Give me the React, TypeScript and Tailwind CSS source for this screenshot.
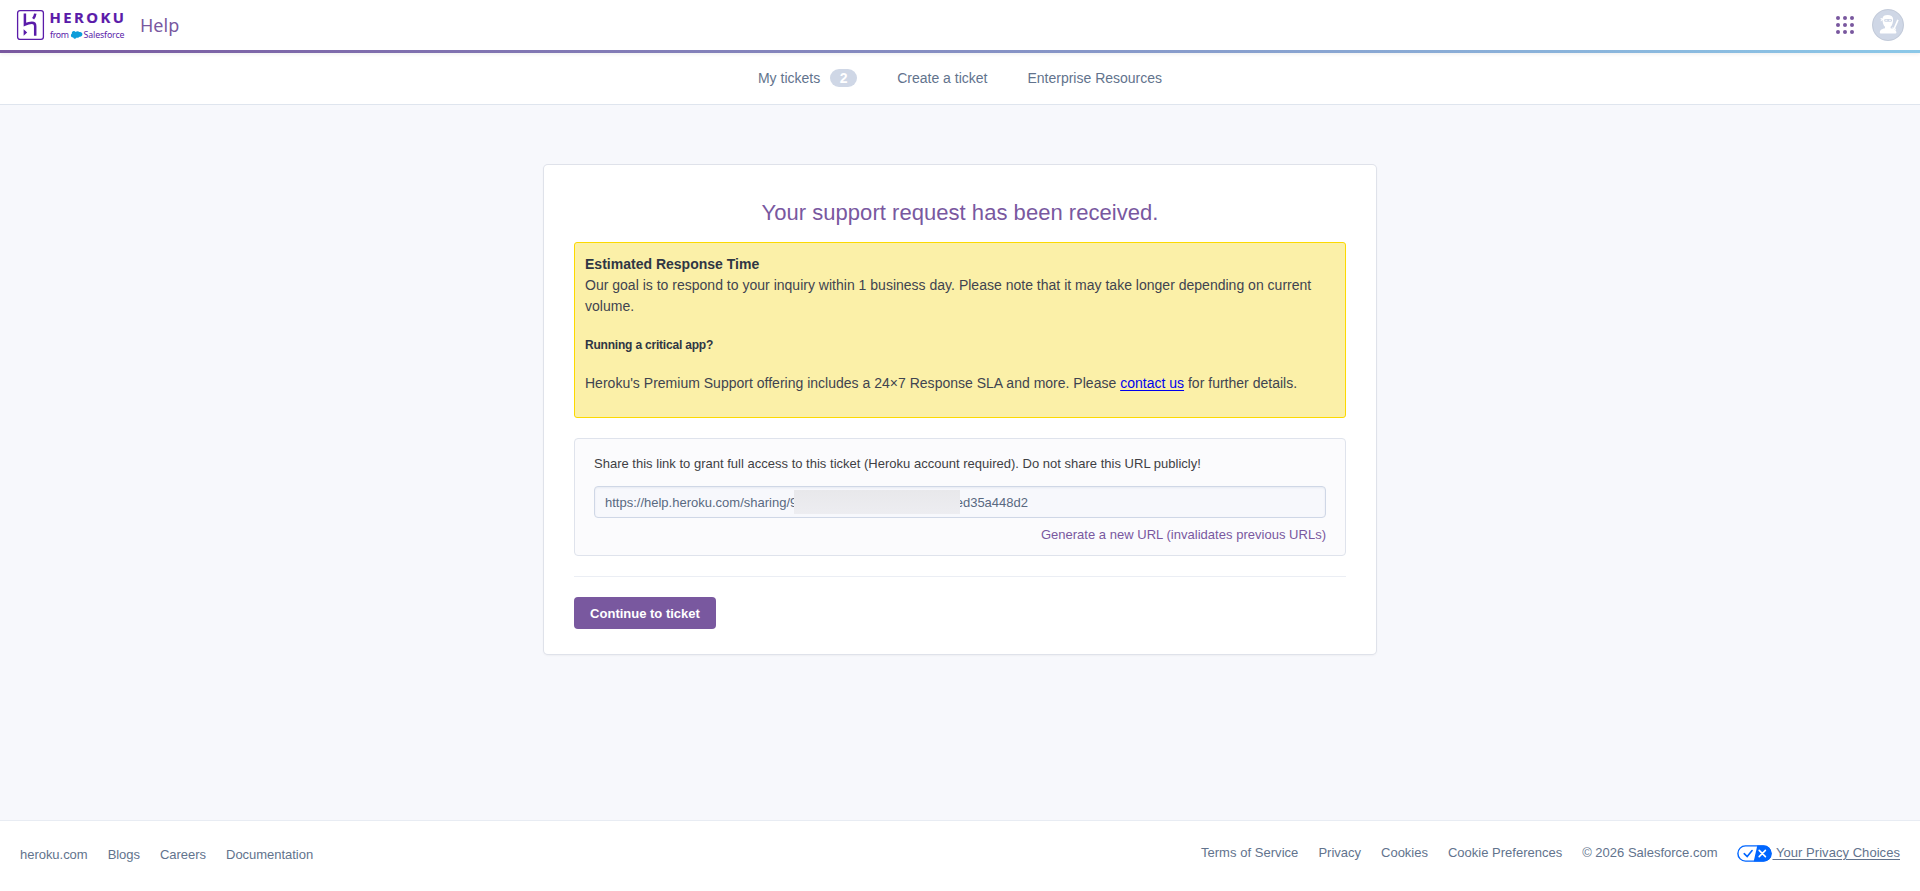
const sans = "font-['Liberation_Sans',Arial,sans-serif]";

function HerokuLogo() {
  return (
    <a href="#" className="flex items-center">
      <svg width="110" height="32" viewBox="0 0 110 32" className="block overflow-visible">
        <rect x="1.6" y="1.6" width="25.8" height="28.8" rx="2.4" fill="none" stroke="#5a1ba9" strokeWidth="1.3" />
        <g fill="none" stroke="#5a1ba9" strokeWidth="2.5">
          <path d="M8.9 4.6v10.9c2.6-1.1 4.9-1.7 7-1.7 2.5 0 3.3 1.4 3.3 3.2v9.7" />
          <path d="M19.3 4.6c-.2 1.9-1 3.6-2.2 5.2" />
        </g>
        <path d="M7.6 20.2v6.5l3.6-3.2z" fill="#5a1ba9" />
        <text
          x="33.4"
          y="14"
          fontSize="14.8"
          fontWeight="700"
          textLength="74.5"
          fill="#5a1ba9"
          stroke="#5a1ba9"
          strokeWidth=".2"
          fontFamily="'Open Sans', 'Noto Sans', sans-serif"
        >
          HEROKU
        </text>
        <text x="34" y="28.8" fontSize="8.8" textLength="19" fill="#5a1ba9" fontFamily="'Noto Sans', sans-serif">
          from
        </text>
        <path
          d="M59.7 22.9c.9-1 2.9-1 3.7.2 1.4-.5 3 .5 3 2.2 0 1.8-1.5 2.7-2.9 2.4-.6 1.1-1.8 1.3-2.7.9-.8 1.5-3 1.3-3.6-.2-1.4.1-2.3-.8-2.3-2 0-.8.4-1.4 1-1.8-.6-2.3 2.3-3.6 3.8-1.7z"
          fill="#0d9dda"
        />
        <text x="67.5" y="28.8" fontSize="8.8" textLength="41" fill="#5a1ba9" fontFamily="'Noto Sans', sans-serif">
          Salesforce
        </text>
      </svg>
      <span className="ml-[14px] font-['Noto_Sans','Open_Sans',sans-serif] text-[18px] leading-[32px] text-[#79589f]">
        Help
      </span>
    </a>
  );
}

function AppsIcon() {
  const dots = [2, 9, 16];
  return (
    <svg width="18" height="18" viewBox="0 0 18 18" fill="#79589f">
      {dots.map((y) => dots.map((x) => <circle key={`${x}-${y}`} cx={x} cy={y} r="2" />))}
    </svg>
  );
}

function Avatar() {
  return (
    <svg width="32" height="32" viewBox="0 0 32 32">
      <circle cx="16" cy="16" r="16" fill="#cfd7e6" />
      <circle cx="16" cy="16" r="15.5" fill="none" stroke="#000" strokeOpacity=".06" />
      <g fill="#fff">
        <path d="M10.5 9.5c.2-2.5 2-3.6 5.2-3.6s5.3 1.2 5.4 4c0 3.3-.7 6.2-2.5 7.9v1.4c3.1.7 5.6 1.2 5.8 4.3 0 .6-.3.9-.9.9H8.700c-.6 0-.9-.3-.9-.9.2-3 2.3-3.5 5.2-4.3v-1.4c-1.7-1.500-2.4-4-2.5-6.700l-1.600 1.300-.4-.7 1.200-1-1.300-.9.500-.7z" />
        <path d="M25.200 10.500l1.500.7-3.600 8.200 1.100.5-.5 1-3.700-1.600.5-1 1.200.5z" />
      </g>
      <rect x="12.2" y="9.9" width="7.8" height="2.8" rx="1.3" fill="#cfd7e6" />
      <path d="M13.3 11.3h2M17 11.3h2" stroke="#fff" strokeWidth=".9" />
    </svg>
  );
}

function PrivacyIcon() {
  return (
    <svg width="35" height="17" viewBox="0 0 35 17" className="block">
      <rect x=".9" y=".9" width="33.2" height="15.2" rx="7.6" fill="#fff" stroke="#06f" strokeWidth="1.4" />
      <path d="M20.3.5h6.2a8 8 0 0 1 0 16H16.7z" fill="#06f" />
      <path d="M7.2 8.7l3 2.9 4.9-6" fill="none" stroke="#06f" strokeWidth="1.6" strokeLinecap="round" />
      <path d="M22.2 5.4l6.2 6.2M28.4 5.4l-6.2 6.2" stroke="#fff" strokeWidth="1.6" strokeLinecap="round" />
    </svg>
  );
}

function Header() {
  return (
    <header className="relative z-10 shadow-[0_1px_4px_rgba(0,0,0,0.08)]">
      <div className="flex h-[50px] items-center justify-between bg-white px-4">
        <HerokuLogo />
        <div className="flex items-center gap-[18px]">
          <AppsIcon />
          <Avatar />
        </div>
      </div>
      <div className="h-[3px] bg-linear-to-r from-[#79589f] to-[#8bc8e8]" />
    </header>
  );
}

function SubNav() {
  return (
    <nav className="flex h-[52px] items-center justify-center gap-10 border-b border-[#dfe5ee] bg-white pb-[2px] text-[14px] leading-[20px] text-[#62738d]">
      <a href="#" className="flex items-center">
        My tickets
        <span className="ml-[10px] h-[18px] w-[27px] rounded-full bg-[#cfd7e6] text-center text-[14px] leading-[18px] font-bold text-white">
          2
        </span>
      </a>
      <a href="#">Create a ticket</a>
      <a href="#">Enterprise Resources</a>
    </nav>
  );
}

function ResponseTime() {
  return (
    <section className="h-[176px] rounded-[3px] border border-[#fcd900] bg-[#fbf0a8] px-[10px] pt-[11px] text-[14px] leading-[21px] tracking-[0.01px] text-[#3f4450]">
      <h2 className="font-bold text-[#2f3644]">Estimated Response Time</h2>
      <p>
        Our goal is to respond to your inquiry within 1 business day. Please note that it may take longer depending on
        current volume.
      </p>
      <h3 className="mt-[19px] text-[12px] leading-[18px] font-bold tracking-[-0.2px] text-[#2f3644]">
        Running a critical app?
      </h3>
      <p className="mt-[19px]">
        Heroku's Premium Support offering includes a 24×7 Response SLA and more. Please{" "}
        <a href="#" className="text-[#0000ee] underline underline-offset-2">
          contact us
        </a>{" "}
        for further details.
      </p>
    </section>
  );
}

function ShareLink() {
  return (
    <section className="mt-5 h-[118px] rounded-[4px] border border-[#dfe3ec] bg-[#fbfbfd] px-[19px] pt-[15px] text-[13px] leading-[20px]">
      <p className="tracking-[0.01px] text-[#3f3f44]">
        Share this link to grant full access to this ticket (Heroku account required). Do not share this URL publicly!
      </p>
      <div className="relative mt-3 flex h-[32px] items-center justify-between rounded-[4px] border border-[#cfd7e6] bg-[#f7f8fc] pt-[2px] pl-[10px] text-[#596981] shadow-[inset_0_1px_2px_rgba(207,215,230,0.4)]">
        <span>https://help.heroku.com/sharing/9</span>
        <span className="mr-[297px]">ed35a448d2</span>
        <div className="absolute top-[3px] left-[199px] h-[24px] w-[166px] bg-linear-to-b from-[#e8e8eb] to-[#ededf1]" />
      </div>
      <a href="#" className="mt-[7px] block text-right tracking-[0.02px] text-[#79589f]">
        Generate a new URL (invalidates previous URLs)
      </a>
    </section>
  );
}

function Footer() {
  return (
    <footer className="flex h-[71px] justify-between border-t border-[#e8ecf3] bg-white px-5 text-[13px] leading-[20px] text-[#62738d]">
      <div className="flex gap-5 pt-6 tracking-[-0.03px]">
        <a href="#">heroku.com</a>
        <a href="#">Blogs</a>
        <a href="#">Careers</a>
        <a href="#">Documentation</a>
      </div>
      <div className="flex gap-5 pt-[22px]">
        <a href="#" className="tracking-[0.04px]">
          Terms of Service
        </a>
        <a href="#">Privacy</a>
        <a href="#">Cookies</a>
        <a href="#">Cookie Preferences</a>
        <span>© 2026 Salesforce.com</span>
        <a href="#" className="flex">
          <span className="mt-[2px]">
            <PrivacyIcon />
          </span>
          <span className="tracking-[0.05px] whitespace-pre underline underline-offset-2"> Your Privacy Choices</span>
        </a>
      </div>
    </footer>
  );
}

export default function App() {
  return (
    <div className={`flex h-[891px] flex-col bg-[#f7f8fc] ${sans}`}>
      <Header />
      <SubNav />
      <main className="flex-1 pt-[60px]">
        <div className="mx-auto h-[489px] w-[832px] rounded-[4px] bg-white px-[30px] pt-[30px] shadow-[0_0_0_1px_#dfe2ea,0_1px_3px_rgba(0,0,0,0.08)]">
          <h1 className="mb-3 text-center text-[22px] leading-[35px] tracking-[0.04px] text-[#79589f]">
            Your support request has been received.
          </h1>
          <ResponseTime />
          <ShareLink />
          <hr className="mt-5 border-[#ebeef4]" />
          <button className="mt-5 h-[32px] w-[142px] rounded-[4px] bg-[#79589f] pt-px text-[13px] font-bold text-white">
            Continue to ticket
          </button>
        </div>
      </main>
      <Footer />
    </div>
  );
}
